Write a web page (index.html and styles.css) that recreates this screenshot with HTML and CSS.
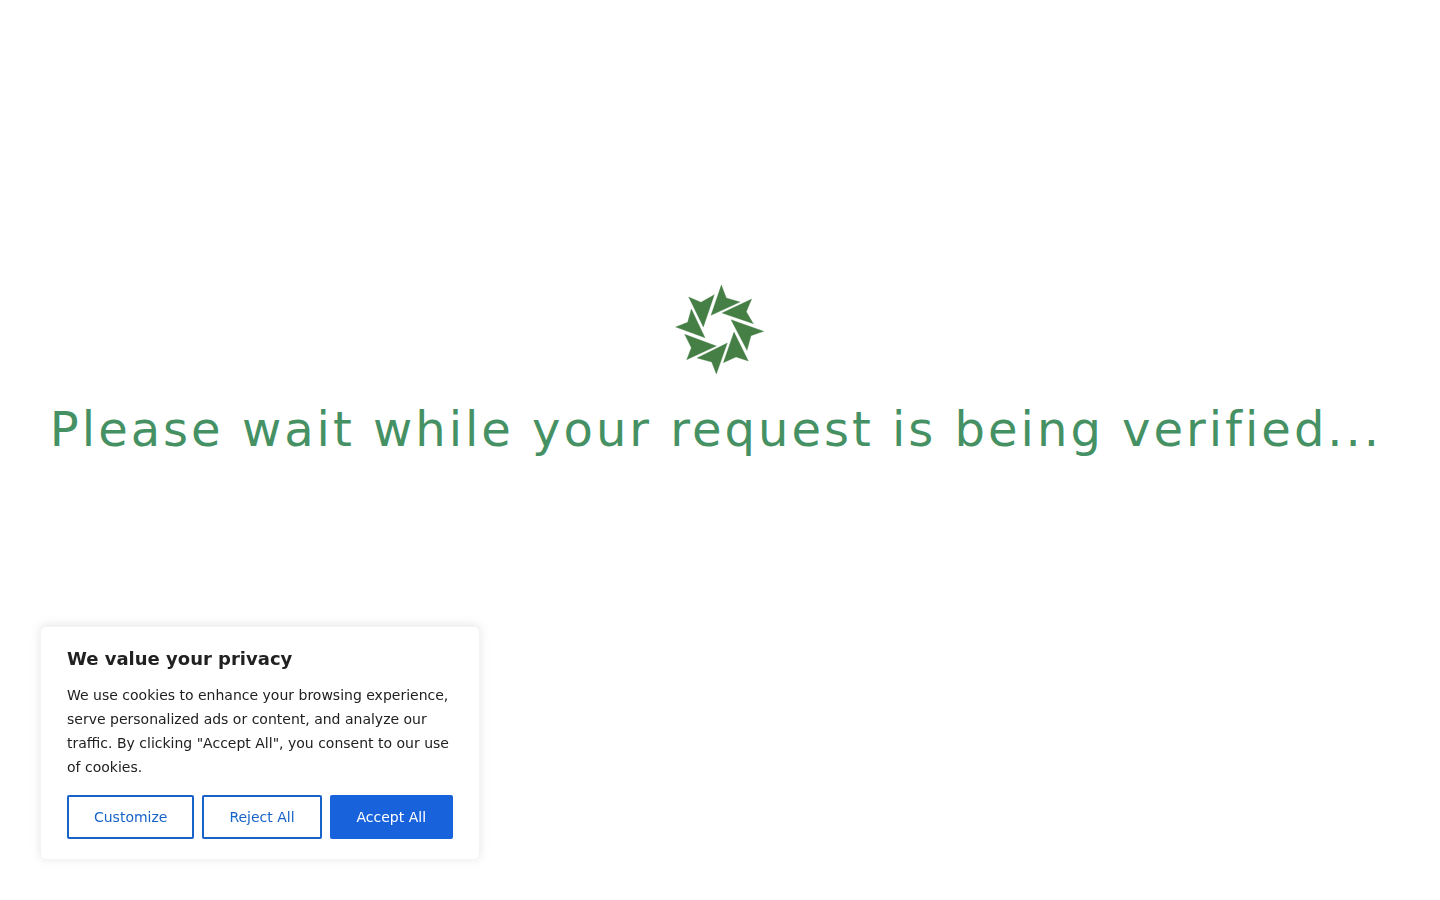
FILE: index.html
```
<!DOCTYPE html>
<html lang="en">
<head>
<meta charset="utf-8">
<title>Please wait</title>
<link rel="stylesheet" href="styles.css">
</head>
<body>
<main class="loader">
  <svg class="loader-logo" viewBox="0 0 300 300" aria-hidden="true">
    <path d="M154 15L169 54L210 66L123 106Z"/>
    <path d="M245 57L229 95L250 131L156 99Z"/>
    <path d="M281 154L243 167L231 211L183 119Z"/>
    <path d="M192 156L235 243L198 231L160 248Z"/>
    <path d="M172 189L139 282L125 246L81 234Z"/>
    <path d="M139 198L50 239L64 203L44 163Z"/>
    <path d="M17 141L53 127L64 87L105 173Z"/>
    <path d="M56 51L93 67L133 44L100 141Z"/>
  </svg>
  <h1 class="loader-text">Please wait while your request is being verified...</h1>
</main>
<section class="consent" aria-labelledby="consent-title">
  <h2 class="consent-title" id="consent-title">We value your privacy</h2>
  <p class="consent-text">We use cookies to enhance your browsing experience, serve personalized ads or content, and analyze our traffic. By clicking "Accept All", you consent to our use of cookies.</p>
  <div class="consent-buttons">
    <button type="button" class="btn">Customize</button>
    <button type="button" class="btn">Reject All</button>
    <button type="button" class="btn btn-accept">Accept All</button>
  </div>
</section>
</body>
</html>
```
FILE: styles.css
```
* {
  box-sizing: border-box;
}

body {
  margin: 0;
  background: #fff;
  font-family: "DejaVu Sans", sans-serif;
}

.loader {
  display: flex;
  flex-direction: column;
  align-items: center;
  padding-top: 280px;
}

.loader-logo {
  width: 100px;
  height: 100px;
  fill: #457f45;
  stroke: #457f45;
  stroke-width: 1;
}

.loader-text {
  margin: 20px 0 0;
  padding-right: 8px;
  color: #459164;
  font-size: 48px;
  font-weight: normal;
  line-height: 58px;
  letter-spacing: 3px;
  text-align: center;
}

/* cookie notice */
.consent {
  position: fixed;
  left: 40px;
  bottom: 40px;
  width: 440px;
  max-width: calc(100% - 80px);
  padding: 20px 26px;
  background: #fff;
  border: 1px solid #f4f4f4;
  border-radius: 6px;
  box-shadow: 0 -1px 10px rgba(172, 171, 171, 0.3);
  color: #212121;
}

.consent-title {
  margin: 0 0 12px;
  font-size: 18px;
  line-height: 24px;
}

.consent-text {
  margin: 0 0 16px;
  font-size: 14px;
  line-height: 24px;
}

.consent-buttons {
  display: flex;
  gap: 8px;
}

.btn {
  flex: auto;
  padding: 8px 24px;
  background: transparent;
  border: 2px solid #1863c8;
  border-radius: 2px;
  color: #1863c8;
  font-family: inherit;
  font-size: 14px;
  line-height: 24px;
  white-space: nowrap;
  cursor: pointer;
}

.btn-accept {
  background: #1863dc;
  border-color: #1863dc;
  color: #fff;
}
```
